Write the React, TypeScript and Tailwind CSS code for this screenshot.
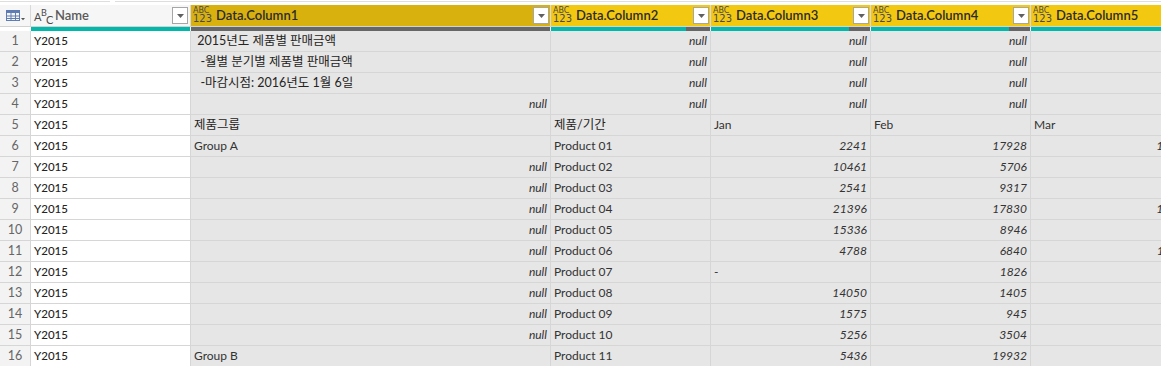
import React from 'react';

type Kind = 'text' | 'big' | 'null' | 'num' | 'empty';
interface Cell {
  v: string;
  k: Kind;
}

const N: Cell = { v: 'null', k: 'null' };
const E: Cell = { v: '', k: 'empty' };
const t = (v: string): Cell => ({ v, k: 'text' });
const b = (v: string): Cell => ({ v, k: 'big' });
const n = (v: string): Cell => ({ v, k: 'num' });

// widths include the 1px right border
const widths = ['w-[360px]', 'w-[160px]', 'w-[160px]', 'w-[160px]', 'w-[164px]'];

// last column runs past the window edge, only long values peek in
const rows: Cell[][] = [
  [b(' 2015년도 제품별 판매금액'), N, N, N, E],
  [b('  -월별 분기별 제품별 판매금액'), N, N, N, E],
  [b('  -마감시점: 2016년도 1월 6일'), N, N, N, E],
  [N, N, N, N, E],
  [b('제품그룹'), b('제품/기간'), t('Jan'), t('Feb'), t('Mar')],
  [t('Group A'), t('Product 01'), n('2241'), n('17928'), n('15312')],
  [N, t('Product 02'), n('10461'), n('5706'), E],
  [N, t('Product 03'), n('2541'), n('9317'), E],
  [N, t('Product 04'), n('21396'), n('17830'), n('12590')],
  [N, t('Product 05'), n('15336'), n('8946'), E],
  [N, t('Product 06'), n('4788'), n('6840'), n('13056')],
  [N, t('Product 07'), t('-'), n('1826'), E],
  [N, t('Product 08'), n('14050'), n('1405'), E],
  [N, t('Product 09'), n('1575'), n('945'), E],
  [N, t('Product 10'), n('5256'), n('3504'), E],
  [t('Group B'), t('Product 11'), n('5436'), n('19932'), E],
];

const TableIcon = () => (
  <svg width="20" height="12" viewBox="0 0 20 12" fill="none">
    <rect x="0.5" y="0.5" width="13" height="10" stroke="#5d7db3" />
    <rect x="0.5" y="0.5" width="13" height="2.5" fill="#5d7db3" />
    <line x1="5" y1="3" x2="5" y2="11" stroke="#5d7db3" />
    <line x1="9.5" y1="3" x2="9.5" y2="11" stroke="#5d7db3" />
    <line x1="0" y1="6" x2="14" y2="6" stroke="#5d7db3" />
    <line x1="0" y1="8.5" x2="14" y2="8.5" stroke="#5d7db3" />
    <path d="M15 8h4l-2 2.2z" fill="#555" />
  </svg>
);

const DropBox = () => (
  <div className="w-[16px] h-[17px] bg-white border border-[#a6a6a6] flex items-center justify-center shrink-0">
    <svg width="7" height="4" viewBox="0 0 7 4">
      <path d="M0 0h7L3.5 4z" fill="#606060" />
    </svg>
  </div>
);

const AnyIcon = () => (
  <div className="flex flex-col leading-none text-[#4a4a4a] w-[17px] shrink-0 font-['DejaVu_Sans',sans-serif]">
    <span className="text-[8px]">ABC</span>
    <span className="text-[10px] -mt-[1px]">123</span>
  </div>
);

const TextIcon = () => (
  <div className="relative w-[20px] h-[16px] text-[#4a4a4a] font-['Lato',sans-serif] shrink-0">
    <span className="absolute left-0 top-[3px] text-[11px] leading-none">A</span>
    <span className="absolute left-[7px] top-0 text-[9px] leading-none">B</span>
    <span className="absolute left-[12px] top-[6px] text-[11px] leading-none">C</span>
  </div>
);

const DataHeader = ({ label, w, selected, box }: { label: string; w: string; selected?: boolean; box: boolean }) => (
  <div
    className={`${w} h-full shrink-0 flex items-center pl-[2px] pr-[1px] gap-[6px] border-r border-[#d9d9d9] ${
      selected ? 'bg-[#d9b10f]' : 'bg-[#f2c811]'
    }`}
  >
    <AnyIcon />
    <span className="flex-1 font-semibold text-[#2b2b2b] text-[13px] whitespace-nowrap">{label}</span>
    {box && <DropBox />}
  </div>
);

const Bar = ({ w, grayFrom }: { w: string; grayFrom?: number }) => (
  <div className={`${w} h-full shrink-0 flex border-r border-[#f0f0f0]`}>
    {grayFrom === 0 ? (
      <div className="flex-1 bg-[#666666]" />
    ) : (
      <>
        <div className="flex-1 bg-[#01b8aa]" />
        {grayFrom ? <div className="bg-[#666666]" style={{ width: grayFrom }} /> : null}
      </>
    )}
  </div>
);

const DataCell = ({ c, w }: { c: Cell; w: string }) => {
  const base = `${w} h-full shrink-0 border-r border-[#d6d6d6] bg-[#e6e6e6] flex items-center px-[3px] overflow-hidden whitespace-pre`;
  if (c.k === 'null' || c.k === 'num')
    return <div className={`${base} justify-end italic text-[#333]`}>{c.v}</div>;
  if (c.k === 'big')
    return <div className={`${base} text-[12.5px] text-[#252423]`}>{c.v}</div>;
  return <div className={`${base} text-[#333]`}>{c.v}</div>;
};

export default function App() {
  return (
    <div className="w-[1161px] h-[366px] overflow-hidden bg-white font-['Lato','Noto_Sans_CJK_KR',sans-serif] text-[12px] text-[#333]">
      {/* top strip */}
      <div className="h-[5px] flex pt-[1px]">
        <div className="w-[110px] h-[1px] bg-[#dedede]" />
        <div className="w-[5px]" />
        <div className="flex-1 h-[1px] bg-[#dedede]" />
      </div>

      {/* header */}
      <div className="flex h-[22px] w-[1200px] border-b border-[#d2d2d2]">
        <div className="w-[31px] h-full shrink-0 bg-[#f6f6f6] border-r border-[#d9d9d9] flex items-center pl-[6px]">
          <TableIcon />
        </div>
        <div className="w-[160px] h-full shrink-0 bg-[#f6f6f6] border-r border-[#d9d9d9] flex items-center pl-[3px] pr-[2px] gap-[1px]">
          <TextIcon />
          <span className="flex-1 text-[#5a5a5a] font-semibold text-[13px]">Name</span>
          <DropBox />
        </div>
        <DataHeader label="Data.Column1" w={widths[0]} selected box />
        <DataHeader label="Data.Column2" w={widths[1]} box />
        <DataHeader label="Data.Column3" w={widths[2]} box />
        <DataHeader label="Data.Column4" w={widths[3]} box />
        <DataHeader label="Data.Column5" w={widths[4]} box={false} />
      </div>

      {/* quality bar */}
      <div className="flex h-[4px] w-[1200px]">
        <div className="w-[31px] h-full shrink-0 bg-white" />
        <Bar w="w-[160px]" />
        <Bar w={widths[0]} grayFrom={0} />
        <Bar w={widths[1]} grayFrom={24} />
        <Bar w={widths[2]} grayFrom={21} />
        <Bar w={widths[3]} grayFrom={21} />
        <Bar w={widths[4]} />
      </div>

      {/* rows */}
      {rows.map((r, i) => (
        <div key={i} className="flex h-[21px] w-[1200px] border-b border-[#d6d6d6]">
          <div className="w-[31px] h-full shrink-0 bg-[#f3f3f3] border-r border-[#d6d6d6] flex items-center justify-center text-[#666] text-[12.5px]">
            {i + 1}
          </div>
          <div className="w-[160px] h-full shrink-0 bg-white border-r border-[#d6d6d6] flex items-center px-[3px] text-[#252423] text-[11.5px] font-medium">
            Y2015
          </div>
          {r.map((c, j) => (
            <DataCell key={j} c={c} w={widths[j]} />
          ))}
        </div>
      ))}
    </div>
  );
}
